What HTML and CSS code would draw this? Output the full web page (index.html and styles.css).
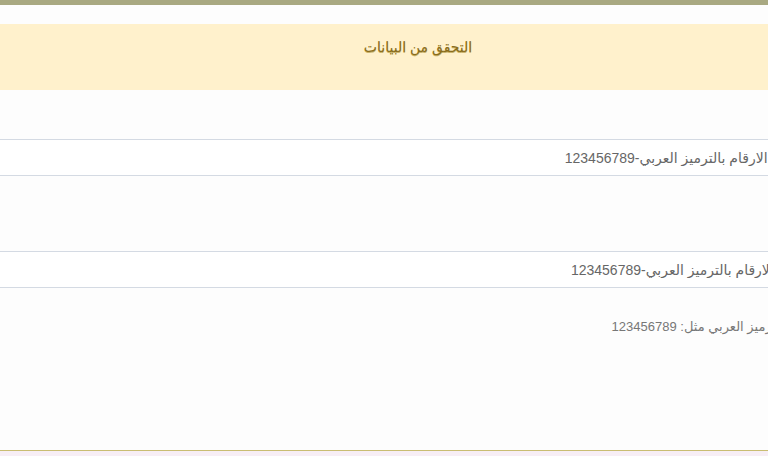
FILE: index.html
```html
<!DOCTYPE html>
<html lang="ar">
<head>
  <meta charset="UTF-8">
  <meta name="viewport" content="width=device-width, initial-scale=1.0">
  <title>التحقق من البيانات</title>
  <link rel="stylesheet" href="styles.css">
</head>
<body>
  <!-- Top strip -->
  <div class="top-bar"></div>

  <div class="page" dir="rtl">
    <!-- Heading banner -->
    <div class="banner">
      <h2>التحقق من البيانات</h2>
    </div>

    <!-- Form -->
    <form class="check-form">
      <div class="field">
        <input class="field-input" type="text" value="اكتب الارقام بالترميز العربي-123456789">
      </div>
      <div class="field field-second">
        <input class="field-input" type="text" value="ادخل الارقام بالترميز العربي-123456789">
        <p class="hint">يجب ادخال الارقام بالترميز العربي مثل: 123456789</p>
      </div>
    </form>
  </div>

  <div class="footer-line"></div>
</body>
</html>
```

FILE: styles.css
```css
/* General Styles */
html, body {
  margin: 0;
  height: 100%;
  overflow: hidden;
}

body {
  font-family: 'Liberation Sans', Arial, 'DejaVu Sans', sans-serif;
  background-color: #fdfdfd;
  color: #555;
  display: flex;
  flex-direction: column;
}

/* Olive strip on top */
.top-bar {
  height: 5px;
  background-color: #a9a982;
}

/* Content is wider than the window, right side is cut */
.page {
  width: 836px;
  flex: 1;
  padding-top: 19px;
}

/* Heading banner */
.banner {
  height: 66px;
  background-color: #fff1cc;
  display: flex;
  justify-content: center;
  padding-top: 15px;
  box-sizing: border-box;
}

.banner h2 {
  margin: 0;
  font-size: 14px;
  font-weight: normal;
  color: #8a6d1b;
  text-shadow: 0 1px 0 #c9b36a;
}

/* Form */
.check-form {
  padding-top: 49px;
}

.field-input {
  display: block;
  width: 100%;
  height: 37px;
  box-sizing: border-box;
  border: 0;
  border-top: 1px solid #d4dae3;
  border-bottom: 1px solid #d4dae3;
  background-color: #fff;
  padding: 0 36px 0 12px;
  font-family: inherit;
  font-size: 14px;
  color: #666;
  direction: rtl;
  outline: none;
}

.field-second {
  margin-top: 75px;
}

.field-second .field-input {
  padding-right: 29px;
}

.hint {
  margin: 31px 0 0;
  font-size: 13px;
  color: #777;
  text-indent: -54px; /* starts past the window edge, as in the original */
}

/* Bottom line */
.footer-line {
  height: 5px;
  border-top: 1px solid #c9bd72;
  background-color: #f7eef5;
}
```
